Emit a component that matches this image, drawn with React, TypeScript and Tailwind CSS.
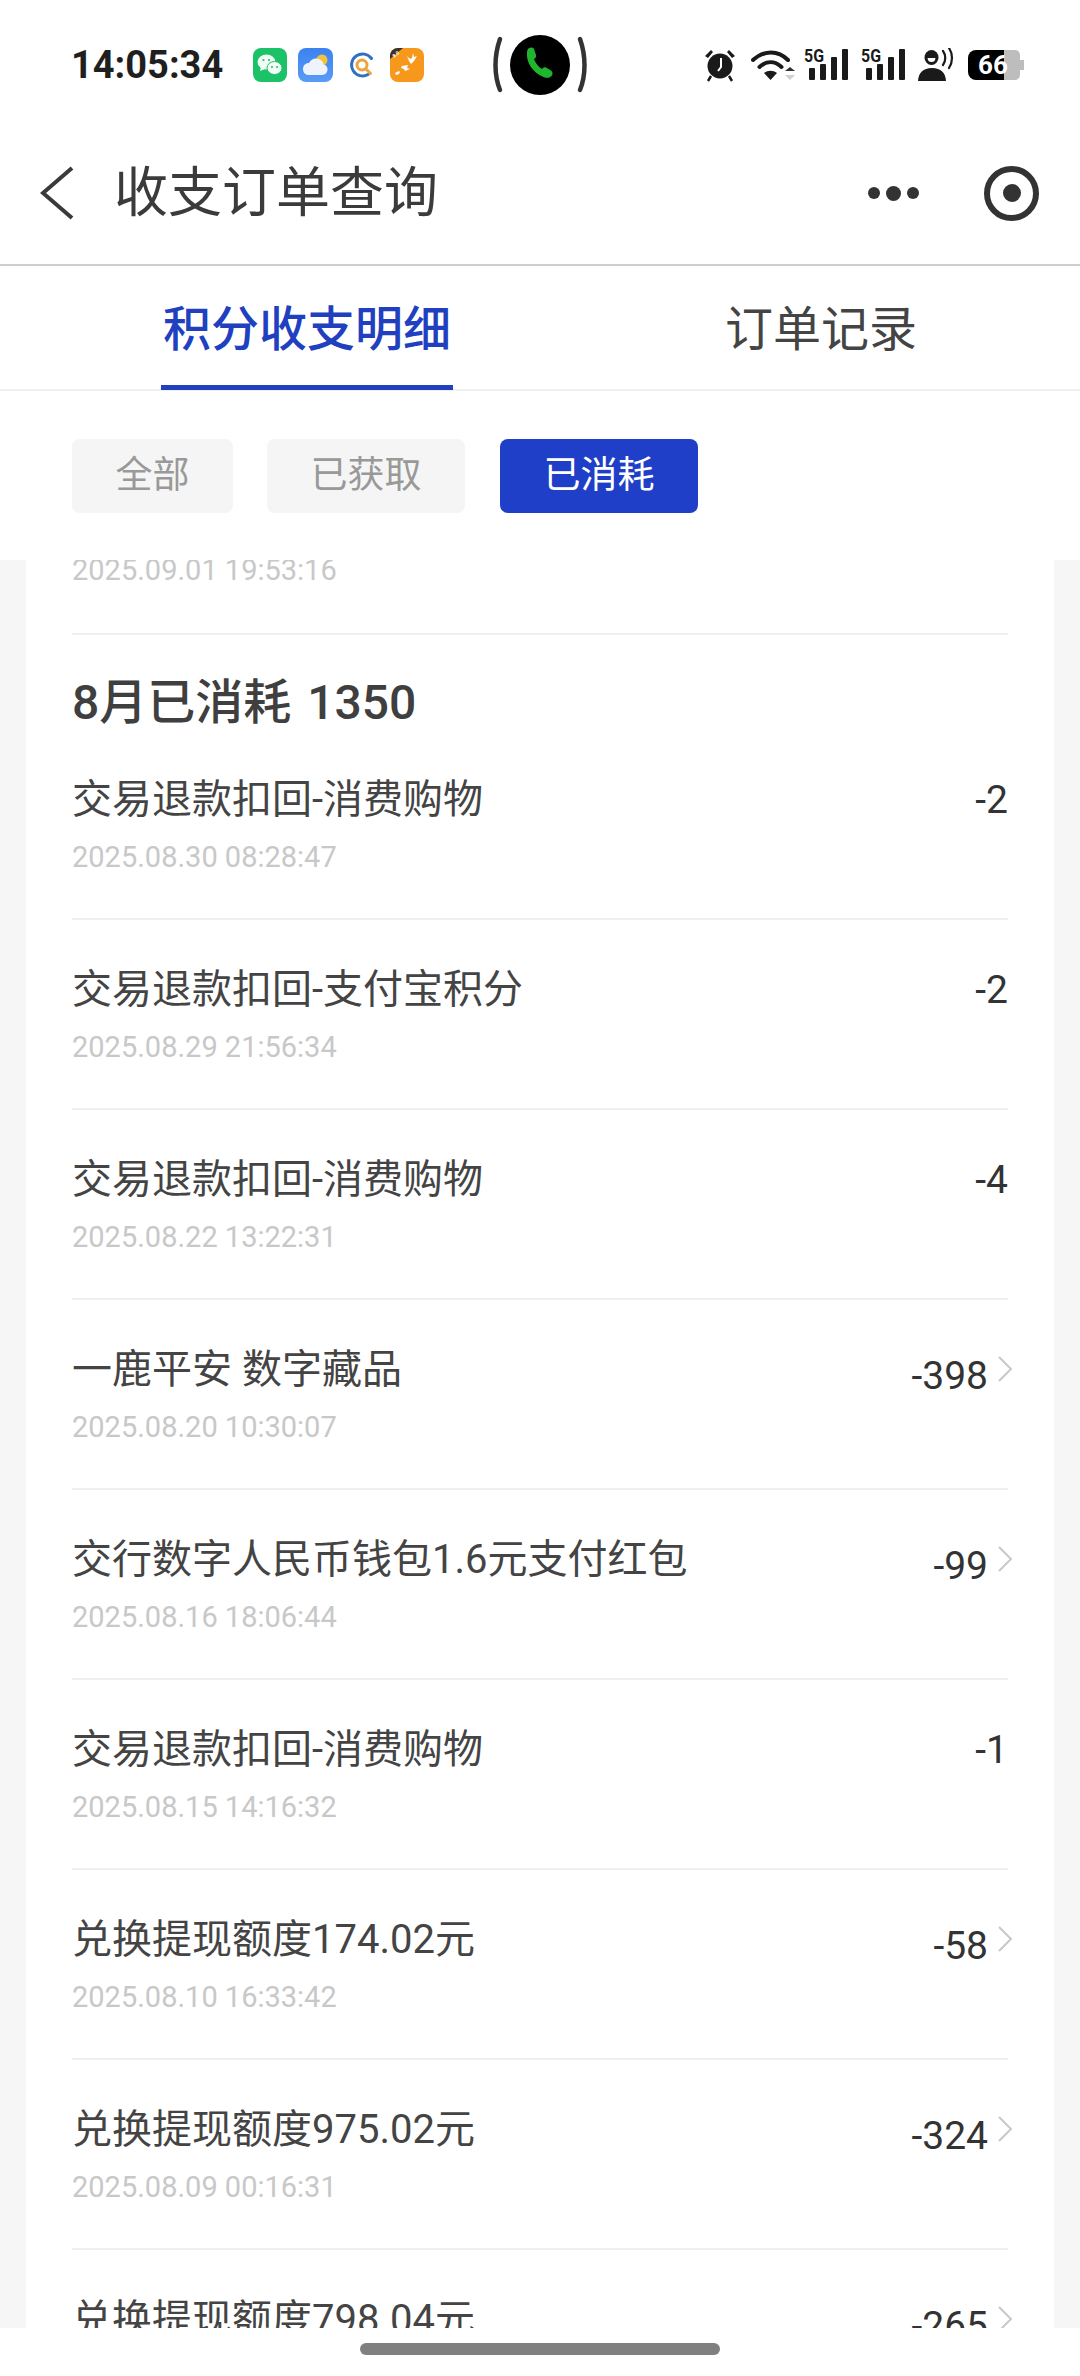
import React from 'react';

const sans = 'font-["Roboto","Noto_Sans_CJK_SC",sans-serif]';

interface Record {
  title: string;
  date: string;
  amount: string;
  link?: boolean;
}

const records: Record[] = [
  { title: '交易退款扣回-消费购物', date: '2025.08.30 08:28:47', amount: '-2' },
  { title: '交易退款扣回-支付宝积分', date: '2025.08.29 21:56:34', amount: '-2' },
  { title: '交易退款扣回-消费购物', date: '2025.08.22 13:22:31', amount: '-4' },
  { title: '一鹿平安 数字藏品', date: '2025.08.20 10:30:07', amount: '-398', link: true },
  { title: '交行数字人民币钱包1.6元支付红包', date: '2025.08.16 18:06:44', amount: '-99', link: true },
  { title: '交易退款扣回-消费购物', date: '2025.08.15 14:16:32', amount: '-1' },
  { title: '兑换提现额度174.02元', date: '2025.08.10 16:33:42', amount: '-58', link: true },
  { title: '兑换提现额度975.02元', date: '2025.08.09 00:16:31', amount: '-324', link: true },
  { title: '兑换提现额度798.04元', date: '2025.08.07 11:02:15', amount: '-265', link: true },
];

function AppIcons() {
  return (
    <div className="flex items-center ml-[29px]">
      {/* wechat */}
      <svg width="34" height="34" viewBox="0 0 34 34">
        <rect width="34" height="34" rx="8" fill="#1cc267" />
        <ellipse cx="13.5" cy="14" rx="9" ry="7.5" fill="#f2fbf5" />
        <path d="M8 19l-1 4 5-2z" fill="#f2fbf5" />
        <ellipse cx="21.5" cy="20" rx="7.5" ry="6.5" fill="#f2fbf5" stroke="#1cc267" strokeWidth="1" />
        <circle cx="10.5" cy="12" r="1.1" fill="#1cc267" />
        <circle cx="16" cy="12" r="1.1" fill="#1cc267" />
        <circle cx="19" cy="19" r="1" fill="#1cc267" />
        <circle cx="24" cy="19" r="1" fill="#1cc267" />
      </svg>
      {/* weather */}
      <svg width="35" height="34" viewBox="0 0 35 34" className="ml-[11px]">
        <defs>
          <linearGradient id="sky" x1="0" y1="0" x2="0" y2="1">
            <stop offset="0" stopColor="#3b82f0" />
            <stop offset="1" stopColor="#5a9cf5" />
          </linearGradient>
        </defs>
        <rect width="35" height="34" rx="8" fill="url(#sky)" />
        <circle cx="24" cy="12" r="5.5" fill="#f5c33b" />
        <path d="M11 27c-4 0-6-2.600-6-6s2.500-6 6-6c1.500-3 4-4.500 7-4.500 4 0 7 2.500 7.500 6 2.500.5 4 2.300 4 4.800 0 3.400-2.300 5.700-5.500 5.700z" fill="#eef4fb" />
      </svg>
      {/* search app */}
      <svg width="26" height="26" viewBox="0 0 26 26" className="ml-[16px]">
        <path d="M22.500 6.500A11 11 0 1 0 19 22.500" fill="none" stroke="#2f6fc4" strokeWidth="3" strokeLinecap="round" />
        <circle cx="13" cy="13" r="5" fill="none" stroke="#eba53a" strokeWidth="3" />
        <path d="M16.500 16.500l5 5" stroke="#eba53a" strokeWidth="3" strokeLinecap="round" />
      </svg>
      {/* orange app */}
      <svg width="34" height="34" viewBox="0 0 34 34" className="ml-[15px]">
        <rect width="34" height="34" rx="8" fill="#f7971c" />
        <path d="M0 11V8a8 8 0 0 1 8-8h5z" fill="#3a3226" />
        <text x="3" y="9" fontSize="5" fontWeight="700" fill="#fff" fontFamily="Roboto" transform="rotate(-42 5 8)">8.0</text>
        <path d="M17 8l3 3 2-1 1-5 1 4 3-1-3 5-3 3-2-3z" fill="#fff" />
        <path d="M12 18l6-1-1 3 3 1-5 2-1-2-3-1z" fill="#fff" />
        <path d="M5 25l4-2 1 1-1 2-3 1z" fill="#fff" />
      </svg>
    </div>
  );
}

function CallPill() {
  return (
    <svg width="96" height="62" viewBox="0 0 96 62" className="ml-[68px]">
      <path d="M8 5C2 22 2 41 8 56" fill="none" stroke="#333" strokeWidth="4.500" strokeLinecap="round" />
      <path d="M88 5c6 17 6 36 0 51" fill="none" stroke="#333" strokeWidth="4.500" strokeLinecap="round" />
      <ellipse cx="48" cy="31" rx="30" ry="30" fill="#000" />
      <path d="M36 15c2-2 5-2 6 0l2 6c.5 2-.5 3-2 4 1.500 4 4 7.500 8 10 1-1.500 2.500-2 4-1.500l5 3c2 1.500 2 4 .5 5.500-2 2-5 2.500-8 1C40 38 34 28 35 18c0-1 .5-2 1-3z" fill="#1fb52d" />
    </svg>
  );
}

function Signal() {
  return (
    <svg width="45" height="40" viewBox="0 0 45 40">
      <text x="0" y="17" fontSize="18" fontWeight="700" fontFamily="Roboto" fill="#1a1a1a" textLength="20" lengthAdjust="spacingAndGlyphs">5G</text>
      <rect x="5" y="23" width="6" height="12" rx="1" fill="#1a1a1a" />
      <rect x="16" y="19" width="6" height="16" rx="1" fill="#1a1a1a" />
      <rect x="27" y="12" width="6" height="23" rx="1" fill="#1a1a1a" />
      <rect x="38" y="4" width="6" height="31" rx="1" fill="#1a1a1a" />
    </svg>
  );
}

function StatusIcons() {
  return (
    <div className="flex items-center ml-auto">
      {/* alarm */}
      <svg width="32" height="34" viewBox="0 0 32 34">
        <circle cx="16" cy="18" r="12.500" fill="#1a1a1a" />
        <path d="M1 8l6-6 2 2-5 6zM31 8l-6-6-2 2 5 6z" fill="#1a1a1a" />
        <path d="M7 28l-3 5M25 28l3 5" stroke="#1a1a1a" strokeWidth="2.500" />
        <path d="M17 10v9l-3 4" fill="none" stroke="#fff" strokeWidth="2" />
      </svg>
      {/* wifi */}
      <svg width="45" height="32" viewBox="0 0 45 32" className="ml-[15px]">
        <path d="M2 11C13 1 27 1 37 11" fill="none" stroke="#1a1a1a" strokeWidth="4" strokeLinecap="round" />
        <path d="M8.500 18c7-6.500 15-6.500 22 0" fill="none" stroke="#1a1a1a" strokeWidth="4" strokeLinecap="round" />
        <path d="M19.500 31l-6.500-7c4-3 9-3 13 0z" fill="#1a1a1a" />
        <path d="M39 18l5 4h-10z" fill="#333" />
        <path d="M39 31l5-5h-10z" fill="#d0d0d0" />
      </svg>
      <div className="ml-[8px]">
        <Signal />
      </div>
      <div className="ml-[12px]">
        <Signal />
      </div>
      {/* hd voice */}
      <svg width="36" height="34" viewBox="0 0 36 34" className="ml-[12px]">
        <ellipse cx="13.500" cy="9.500" rx="7" ry="7.500" fill="#1a1a1a" />
        <path d="M9.500 10h8c-.5 3-1.500 4-4 4s-3.500-1-4-4z" fill="#fff" />
        <path d="M0 33c.5-8 5-13 14-13s13.500 5 14 13z" fill="#1a1a1a" />
        <path d="M25 3c3 4 3 10 0 14M31 0c4 6 4 14 0 20" fill="none" stroke="#1a1a1a" strokeWidth="2.200" strokeLinecap="round" />
      </svg>
      {/* battery */}
      <svg width="56" height="30" viewBox="0 0 56 30" className="ml-[14px] mr-[56px]">
        <path d="M8 0h28v30H8a8 8 0 0 1-8-8V8a8 8 0 0 1 8-8z" fill="#000" />
        <path d="M36 0h11a5 5 0 0 1 5 5v5h4v10h-4v5a5 5 0 0 1-5 5H36z" fill="#bdbdbd" />
        <text x="10" y="24" fontSize="26" fontWeight="700" fontFamily="Roboto" fill="#fff">66</text>
      </svg>
    </div>
  );
}

function RecordRow({ item }: { item: Record }) {
  return (
    <div className="pt-[42px] pb-[41px] border-b-2 border-[#efefef]">
      <div className="flex items-start justify-between h-[56px]">
        <div className="text-[40px] leading-[56px] text-[#444]">{item.title}</div>
        <div className="flex items-start">
          <div className={`text-[39px] leading-[56px] text-[#333] ${item.link ? 'mt-[6px]' : ''}`}>{item.amount}</div>
          {item.link && (
            <svg width="16" height="28" viewBox="0 0 16 28" className="ml-[9px] -mr-[5px] mt-[13px]">
              <path d="M2 2l12 12L2 26" fill="none" stroke="#c8c8c8" strokeWidth="2" />
            </svg>
          )}
        </div>
      </div>
      <div className="mt-[9px] text-[29px] leading-[40px] text-[#c8c8c8]">{item.date}</div>
    </div>
  );
}

export default function App() {
  return (
    <div className={`h-[2376px] w-[1080px] flex flex-col bg-white overflow-hidden ${sans}`}>
      {/* Status bar */}
      <div className="h-[116px] pt-[14px] pl-[71px] flex items-center">
        <div className="text-[38px] font-bold text-[#1f1f1f] w-[153px] whitespace-nowrap">14:05:34</div>
        <AppIcons />
        <CallPill />
        <StatusIcons />
      </div>

      {/* Nav */}
      <div className="h-[150px] pt-[6px] flex items-center border-b-2 border-[#cfcfcf] pl-[40px] pr-[41px]">
        <svg width="34" height="54" viewBox="0 0 34 54">
          <path d="M32 2L3 27l29 25" fill="none" stroke="#3a3a3a" strokeWidth="4" />
        </svg>
        <div className="ml-[40px] text-[54px] text-[#3b3b3b]">收支订单查询</div>
        <div className="ml-auto flex items-center gap-[6px] mr-[65px]">
          <span className="w-[12px] h-[12px] rounded-full bg-[#333]" />
          <span className="w-[15px] h-[15px] rounded-full bg-[#333]" />
          <span className="w-[12px] h-[12px] rounded-full bg-[#333]" />
        </div>
        <div className="w-[55px] h-[55px] rounded-full border-[6px] border-[#333] flex items-center justify-center">
          <span className="w-[18px] h-[18px] rounded-full bg-[#333]" />
        </div>
      </div>

      {/* Tabs */}
      <div className="h-[125px] flex pl-[161px] gap-[272px] border-b-2 border-[#efefef]">
        <div className="w-[292px] h-[124px] border-b-[5px] border-[#2040c0] flex justify-center pt-[31px] text-[48px] leading-[66px] text-[#2040c0] font-medium">
          积分收支明细
        </div>
        <div className="pt-[31px] text-[48px] leading-[66px] text-[#444]">订单记录</div>
      </div>

      {/* Filters */}
      <div className="h-[169px] pt-[48px] pl-[72px] flex items-start gap-[34px]">
        <div className="w-[161px] h-[74px] rounded-[8px] bg-[#f5f5f5] text-[#999] text-[37px] flex items-center justify-center">全部</div>
        <div className="w-[198px] h-[74px] rounded-[8px] bg-[#f5f5f5] text-[#999] text-[37px] flex items-center justify-center">已获取</div>
        <div className="ml-[1px] w-[198px] h-[74px] rounded-[8px] bg-[#1f3fc8] text-white text-[37px] flex items-center justify-center">已消耗</div>
      </div>

      {/* Scrolled list */}
      <div className="flex-1 overflow-hidden bg-[#f6f6f6] px-[26px]">
        <div className="bg-white px-[46px]">
          <div className="pb-[53px] border-b-2 border-[#efefef] text-[29px] leading-[20px] text-[#c8c8c8]">
            2025.09.01 19:53:16
          </div>
          <div className="pt-[41px] h-[95px] text-[48px] leading-[54px] font-medium text-[#3f3f3f] [word-spacing:4px]">8月已消耗 1350</div>
          {records.map((item, i) => (
            <RecordRow key={i} item={item} />
          ))}
        </div>
      </div>

      {/* Home indicator */}
      <div className="h-[48px] flex justify-center pt-[15px]">
        <div className="w-[360px] h-[12px] rounded-full bg-[#808080]" />
      </div>
    </div>
  );
}
